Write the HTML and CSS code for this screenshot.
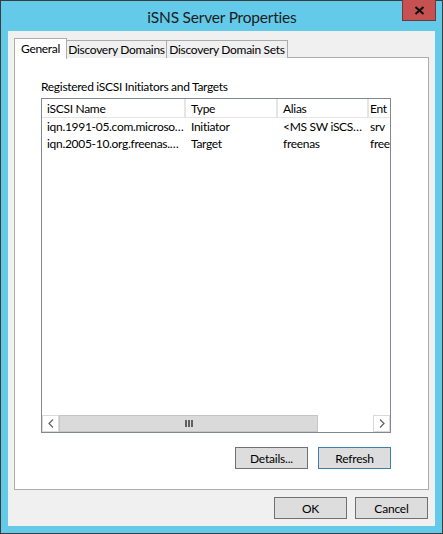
FILE: index.html
```html
<!DOCTYPE html>
<html lang="en">
<head>
    <meta charset="UTF-8">
    <title>iSNS Server Properties</title>
    <link rel="stylesheet" href="styles.css">
</head>
<body>
    <div class="window">
        <div class="titlebar">
            <span class="title">iSNS Server Properties</span>
            <button class="close" aria-label="Close">
                <svg width="11" height="9" viewBox="0 0 11 9">
                    <path d="M1.5 1 L9.5 8 M9.5 1 L1.5 8" stroke="#111" stroke-width="2.2" fill="none"/>
                </svg>
            </button>
        </div>

        <div class="client">
            <div class="tabs">
                <div class="tab active tab-general">General</div>
                <div class="tab tab-dd">Discovery Domains</div>
                <div class="tab tab-dds">Discovery Domain Sets</div>
            </div>

            <div class="panel">
                <div class="label">Registered iSCSI Initiators and Targets</div>

                <div class="listview">
                    <div class="lv-head">
                        <div class="col c-name">iSCSI Name</div>
                        <div class="col c-type">Type</div>
                        <div class="col c-alias">Alias</div>
                        <div class="col c-ent">Ent</div>
                    </div>
                    <div class="lv-body">
                        <div class="row">
                            <div class="col c-name">iqn.1991-05.com.microso…</div>
                            <div class="col c-type">Initiator</div>
                            <div class="col c-alias">&lt;MS SW iSCS…</div>
                            <div class="col c-ent">srv</div>
                        </div>
                        <div class="row">
                            <div class="col c-name">iqn.2005-10.org.freenas.…</div>
                            <div class="col c-type">Target</div>
                            <div class="col c-alias">freenas</div>
                            <div class="col c-ent">free</div>
                        </div>
                    </div>
                    <div class="hscroll">
                        <div class="arrow">
                            <svg width="6" height="9" viewBox="0 0 6 9"><path d="M5 0.5 L1 4.5 L5 8.5" stroke="#606060" stroke-width="1.2" fill="none"/></svg>
                        </div>
                        <div class="thumb"><span class="grip"></span><span class="grip"></span><span class="grip"></span></div>
                        <div class="track"></div>
                        <div class="arrow">
                            <svg width="6" height="9" viewBox="0 0 6 9"><path d="M1 0.5 L5 4.5 L1 8.5" stroke="#606060" stroke-width="1.2" fill="none"/></svg>
                        </div>
                    </div>
                </div>

                <div class="panel-buttons">
                    <button class="btn">Details...</button>
                    <button class="btn default">Refresh</button>
                </div>
            </div>

            <div class="footer">
                <button class="btn">OK</button>
                <button class="btn">Cancel</button>
            </div>
        </div>
    </div>
</body>
</html>
```

FILE: styles.css
```css
/* General */
body {
    margin: 0;
    font-family: Lato, "Noto Sans", sans-serif;
    font-size: 12px;
    letter-spacing: -0.3px;
    color: #000;
}

.window {
    width: 443px;
    height: 534px;
    box-sizing: border-box;
    border: 1px solid #3c3c3c;
    background-color: #64cae9;
    padding: 0 7px 7px 7px;
    display: flex;
    flex-direction: column;
}

/* Title bar */
.titlebar {
    height: 30px;
    position: relative;
    display: flex;
    align-items: center;
    justify-content: center;
}

.title {
    font-size: 15.5px;
    letter-spacing: -0.2px;
    color: #1c1c1c;
    margin-top: 1px;
    margin-left: 1px;
}

.close {
    position: absolute;
    top: -1px;
    right: -1px;
    width: 34px;
    height: 21px;
    padding: 0;
    border: 1px solid #6b3a3a;
    border-top: none;
    background-color: #c75050;
    display: flex;
    align-items: center;
    justify-content: center;
}

/* Client area */
.client {
    flex: 1;
    background-color: #f0f0f0;
    padding: 7px 6px;
    display: flex;
    flex-direction: column;
}

.tabs {
    display: flex;
    height: 20px;
    align-items: flex-end;
    margin-bottom: -1px;
    position: relative;
    z-index: 1;
}

.tab {
    height: 18px;
    box-sizing: border-box;
    border: 1px solid #acacac;
    border-bottom: none;
    background-color: #f0f0f0;
    line-height: 17px;
    text-align: center;
    white-space: nowrap;
    margin-left: -1px;
}

.tab.active {
    height: 21px;
    background-color: #fff;
    margin-left: 0;
    line-height: 19px;
    align-self: flex-end;
    margin-bottom: -1px;
}

.tab-general { width: 53px; }
.tab-dd { width: 101px; }
.tab-dds { width: 122px; }

.panel {
    flex: 1;
    background-color: #fff;
    border: 1px solid #acacac;
    padding: 20px 37px 19px 26px;
    display: flex;
    flex-direction: column;
}

.label {
    height: 16px;
    line-height: 17px;
    margin-bottom: 4px;
}

/* List view */
.listview {
    height: 335px;
    box-sizing: border-box;
    border: 1px solid #828790;
    display: flex;
    flex-direction: column;
    overflow: hidden;
}

.lv-head,
.row {
    display: flex;
    white-space: nowrap;
}

.lv-head {
    height: 18px;
    border-bottom: 1px solid #e5e5e5;
}

.lv-head .col {
    border-right: 2px solid #e5e5e5;
    line-height: 20px;
}

.col {
    box-sizing: border-box;
    padding-left: 5px;
    overflow: hidden;
    text-overflow: ellipsis;
    flex-shrink: 0;
}

.c-name { width: 144px; }
.c-type { width: 92px; }
.c-alias { width: 91px; }
.c-ent { width: 40px; padding-left: 1px; text-overflow: clip; }

.lv-head .c-ent { border-right: none; }

.lv-body {
    flex: 1;
}

.row {
    height: 17px;
    line-height: 18px;
}

.hscroll {
    height: 17px;
    display: flex;
    border-top: 1px solid #fff;
}

.arrow {
    width: 17px;
    box-sizing: border-box;
    border: 1px solid #d9d9d9;
    background-color: #fff;
    display: flex;
    align-items: center;
    justify-content: center;
}

.thumb {
    width: 259px;
    box-sizing: border-box;
    background-color: #dadada;
    border: 1px solid #c5c5c5;
    display: flex;
    align-items: center;
    justify-content: center;
    gap: 1px;
}

.grip {
    width: 2px;
    height: 7px;
    background-color: #606060;
}

.track {
    flex: 1;
    background-color: #fff;
}

/* Buttons */
.btn {
    width: 73px;
    height: 22px;
    padding: 0;
    font-family: Lato, "Noto Sans", sans-serif;
    font-size: 12px;
    letter-spacing: -0.2px;
    color: #000;
    background-color: #dddddd;
    border: 1px solid #707070;
}

.btn.default {
    border-color: #3c7fb1;
}

.panel-buttons {
    margin-top: 14px;
    display: flex;
    justify-content: flex-end;
    gap: 10px;
}

.footer {
    margin-top: 7px;
    display: flex;
    justify-content: flex-end;
    gap: 8px;
    padding-right: 1px;
}
```
